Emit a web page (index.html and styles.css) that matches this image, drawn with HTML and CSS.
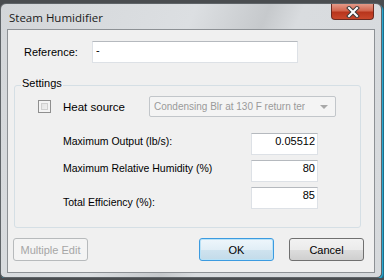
FILE: index.html
```html
<!DOCTYPE html>
<html lang="en">
  <head>
    <meta charset="utf-8" />
    <title>Steam Humidifier</title>
    <link rel="stylesheet" href="styles.css">
  </head>
  <body>
    <div class="window">
      <div class="titlebar">
        <span class="title">Steam Humidifier</span>
        <div class="close">
          <svg width="16" height="12" viewBox="0 0 16 12">
            <path d="M4 2 L12 10 M12 2 L4 10" stroke="#3a3a3a" stroke-width="4" stroke-linecap="square" />
            <path d="M4 2 L12 10 M12 2 L4 10" stroke="#ffffff" stroke-width="2" stroke-linecap="square" />
          </svg>
        </div>
      </div>

      <div class="client">
        <div class="ref-row">
          <label class="ref-label">Reference:</label>
          <input class="textbox ref-input" type="text" value="-" />
        </div>

        <fieldset class="group">
          <legend>Settings</legend>
          <div class="heat-row">
            <span class="check"></span>
            <span class="heat-label">Heat source</span>
            <div class="combo">
              <span class="combo-text">Condensing Blr at 130 F return ter</span>
              <span class="arrow"></span>
            </div>
          </div>

          <div class="fields">
            <label class="field-label">Maximum Output (lb/s):</label>
            <input class="textbox num" type="text" value="0.05512" />
            <label class="field-label">Maximum Relative Humidity (%)</label>
            <input class="textbox num" type="text" value="80" />
            <label class="field-label low">Total Efficiency (%):</label>
            <input class="textbox num" type="text" value="85" />
          </div>
        </fieldset>

        <div class="buttons">
          <button class="btn disabled">Multiple Edit</button>
          <span class="spacer"></span>
          <button class="btn default">OK</button>
          <button class="btn">Cancel</button>
        </div>
      </div>
    </div>
  </body>
</html>
```

FILE: styles.css
```css
body {
  margin: 0;
  padding-top: 3px;
  background: #4a4d50;
  font-family: "Liberation Sans", Arial, sans-serif;
  font-size: 10.5px;
  color: #000;
}
.window {
  width: 382px;
  height: 275px;
  box-sizing: border-box;
  border: 1px solid #5f6468;
  border-radius: 6px 6px 5px 5px;
  box-shadow: 1px 1px 0 #29a6cf, 2px 2px 0 #1b6f8c;
  background: linear-gradient(112deg, #d3d6d9 0%, #dcdfe2 40%, #c6c9cc 55%, #d9dcdf 62%, #d6d9dc 100%);
  padding: 0 6px 4px 6px;
  display: flex;
  flex-direction: column;
}
.titlebar {
  height: 25px;
  display: flex;
  align-items: flex-start;
}
.title {
  flex: 1;
  padding: 6px 0 0 2px;
  font-family: "Open Sans", "Noto Sans", sans-serif;
  font-size: 11.5px;
  color: #1a1a1a;
}
.close {
  width: 43px;
  height: 16px;
  margin-right: 1px;
  box-sizing: border-box;
  border: 1px solid #6b2a20;
  border-top: none;
  border-radius: 0 0 4px 4px;
  background: linear-gradient(#e39a88 0%, #d2654d 45%, #b8351c 55%, #c9482c 100%);
  display: flex;
  align-items: center;
  justify-content: center;
}
.client {
  flex: 1;
  border: 1px solid #8d9195;
  background: #f0f0f0;
  display: flex;
  flex-direction: column;
}
.ref-row {
  display: flex;
  align-items: center;
  margin-top: 11px;
  padding-left: 16px;
}
.ref-label {
  width: 68px;
  font-size: 11px;
}
.textbox {
  box-sizing: border-box;
  height: 22px;
  border: 1px solid #dde1e6;
  border-top-color: #b5b9be;
  background: #fff;
  font-family: "Liberation Sans", Arial, sans-serif;
  font-size: 11px;
  padding: 0 3px;
  margin: 0;
  outline: none;
}
.ref-input {
  width: 206px;
  padding-bottom: 5px;
}
.group {
  margin: 14px 0 0 6px;
  width: 347px;
  box-sizing: border-box;
  border: 1px solid #d5dfe5;
  border-radius: 3px;
  padding: 0 0 18px 0;
}
.group legend {
  margin-left: 6px;
  padding: 0 1px 4px 1px;
  line-height: 13px;
  font-size: 11px;
  color: #000;
}
.heat-row {
  display: flex;
  align-items: center;
  margin-top: 2px;
  padding-left: 23px;
}
.check {
  width: 13px;
  height: 13px;
  box-sizing: border-box;
  border: 1px solid #8f8f8f;
  background: linear-gradient(135deg, #dcdcdc, #f8f8f8);
  box-shadow: inset 0 0 0 2px #f4f4f4, inset 0 0 0 3px #d0d0d0;
}
.heat-label {
  width: 86px;
  margin-left: 12px;
  font-size: 11.5px;
}
.combo {
  width: 187px;
  height: 21px;
  box-sizing: border-box;
  border: 1px solid #c2c6ca;
  border-radius: 2px;
  background: #f4f4f4;
  color: #9a9a9a;
  display: flex;
  align-items: center;
  justify-content: space-between;
  padding: 0 7px 0 4px;
}
.combo-text {
  font-size: 10px;
  white-space: nowrap;
  overflow: hidden;
}
.arrow {
  width: 0;
  height: 0;
  border-left: 4px solid transparent;
  border-right: 4px solid transparent;
  border-top: 4px solid #a8a8a8;
}
.fields {
  display: grid;
  grid-template-columns: 188px 67px;
  row-gap: 5px;
  align-items: center;
  margin-top: 16px;
  padding-left: 48px;
}
.field-label {
  margin-top: -6px;
}
.field-label.low {
  margin-top: 8px;
}
.num {
  text-align: right;
  padding-right: 2px;
  padding-bottom: 6px;
}
.buttons {
  display: flex;
  margin-top: 10px;
  padding: 0 10px 0 5px;
  gap: 15px;
}
.spacer {
  flex: 1;
}
.btn {
  width: 75px;
  height: 23px;
  margin: 0;
  border: 1px solid #707070;
  border-radius: 3px;
  background: linear-gradient(#f2f2f2 0%, #ebebeb 50%, #dddddd 51%, #cfcfcf 100%);
  font-family: "Liberation Sans", Arial, sans-serif;
  font-size: 11px;
  color: #000;
  padding: 0;
}
.btn.default {
  border-color: #3c9be0;
  box-shadow: inset 0 0 0 1px #b9e2f7;
  background: linear-gradient(#eef6fb 0%, #e1eef6 50%, #cfe3ef 51%, #c3dbe9 100%);
}
.btn.disabled {
  border-color: #b7babc;
  background: #f4f4f4;
  color: #a6a6a6;
}
```
